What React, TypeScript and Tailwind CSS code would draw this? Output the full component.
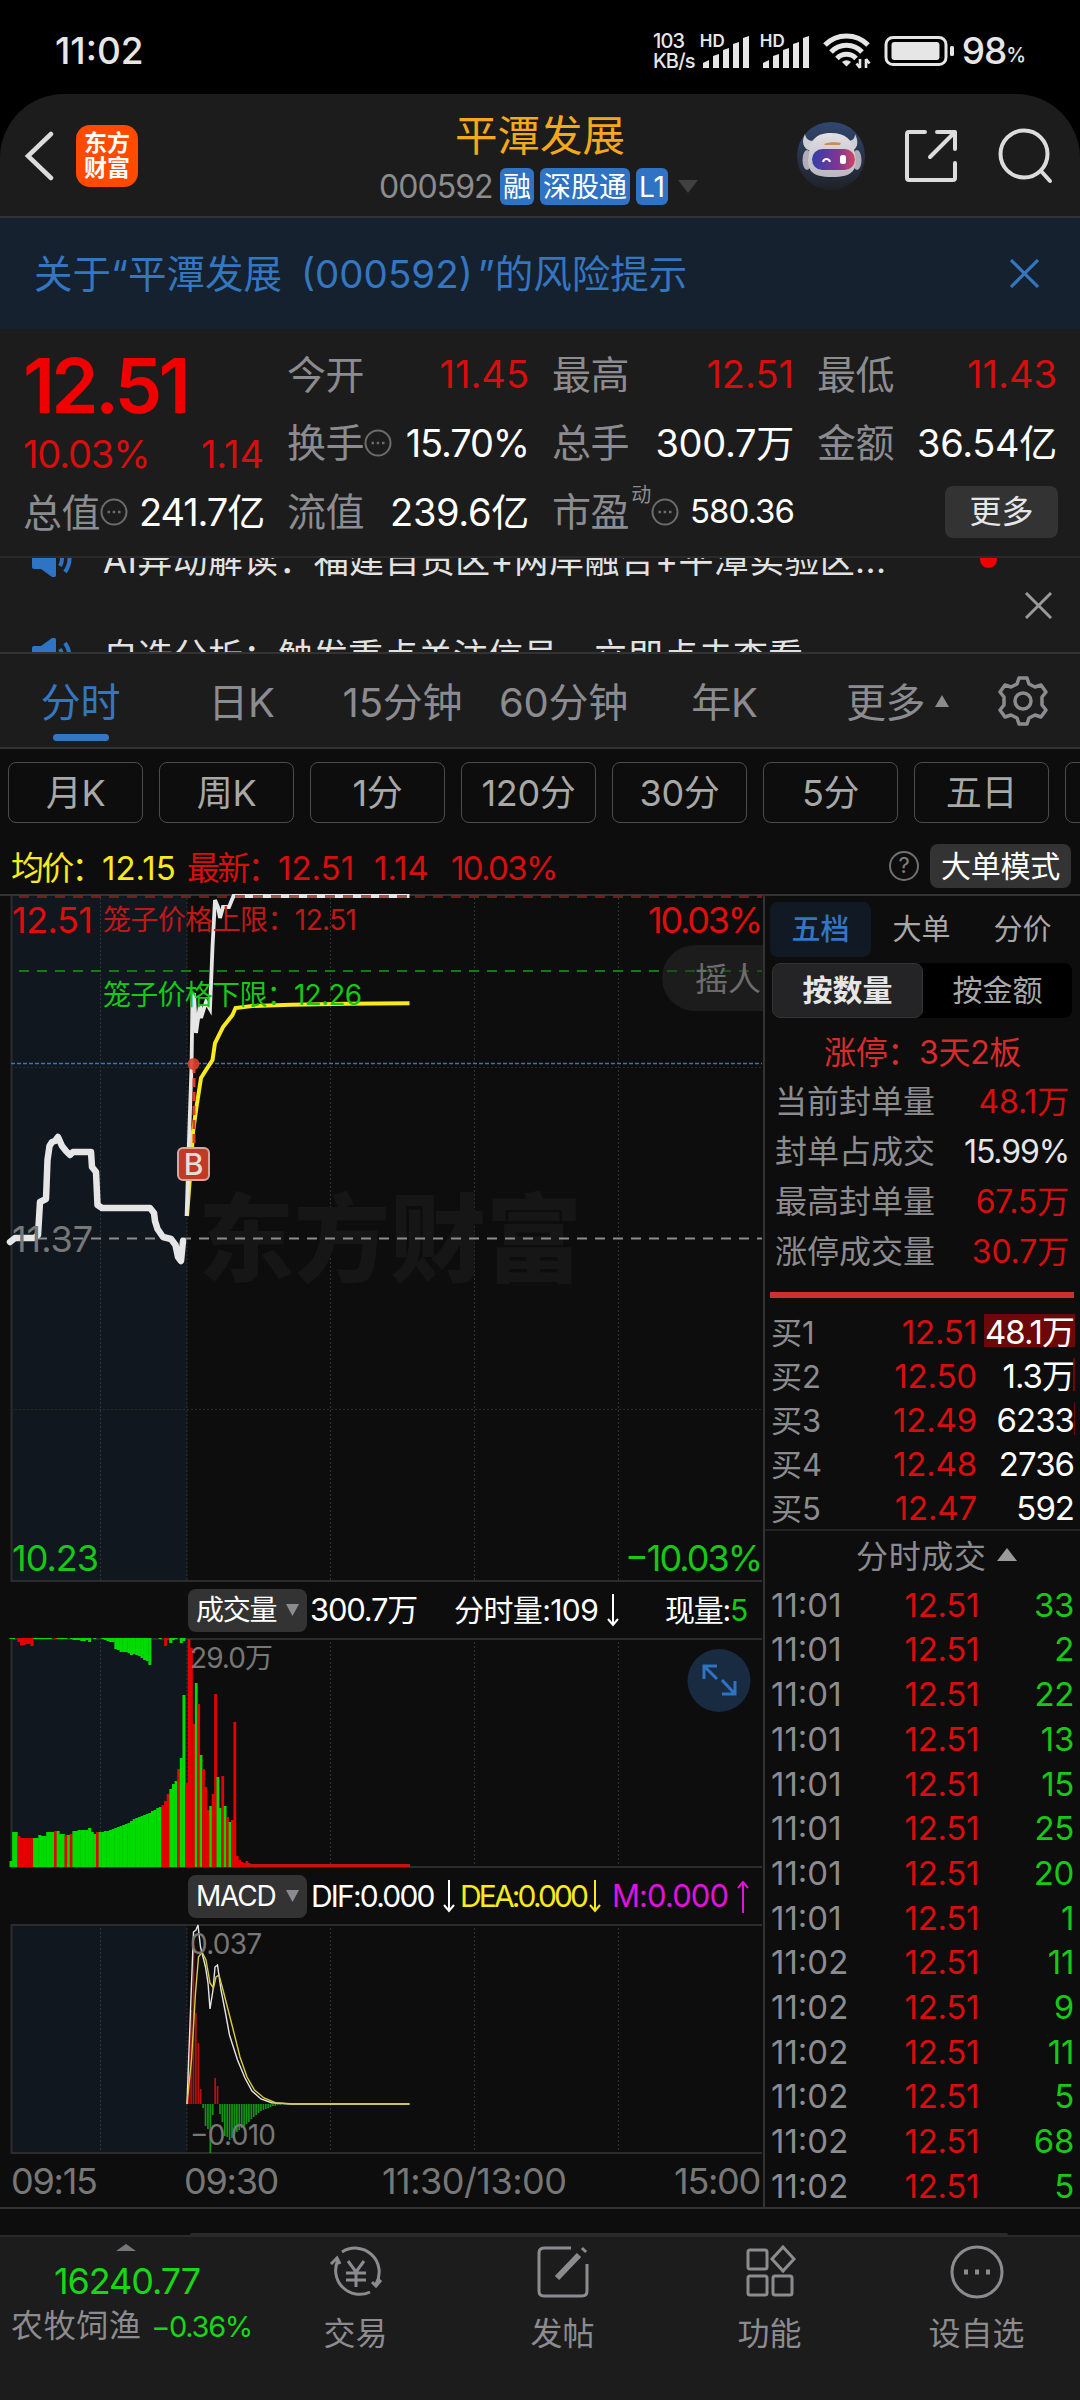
import { ReactNode } from 'react'
import { clsx } from 'clsx'

type Bar = [height: number, color: 'r' | 'g']

const RED = '#e60000'
const GREEN = '#00dc00'

const barColor = { r: RED, g: GREEN }

// Call auction volume, one bar per 2.6px
const AUCTION: Bar[] = [
  [6, 'g'], [35, 'g'], [35, 'g'], [31, 'r'], [29, 'r'], [29, 'r'], [29, 'r'], [29, 'r'], [29, 'r'], [29, 'g'],
  [29, 'g'], [32, 'g'], [31, 'g'], [31, 'g'], [35, 'g'], [35, 'g'], [35, 'g'], [36, 'r'], [36, 'g'], [33, 'g'],
  [33, 'g'], [32, 'r'], [32, 'g'], [33, 'r'], [36, 'g'], [36, 'g'], [37, 'g'], [37, 'g'], [37, 'g'], [37, 'g'],
  [39, 'g'], [35, 'g'], [33, 'g'], [35, 'r'], [35, 'g'], [35, 'g'], [36, 'g'], [36, 'g'], [37, 'g'], [38, 'g'],
  [39, 'g'], [40, 'g'], [41, 'g'], [42, 'g'], [43, 'g'], [44, 'g'], [46, 'g'], [48, 'g'], [49, 'g'], [50, 'g'],
  [51, 'g'], [52, 'g'], [53, 'g'], [54, 'g'], [56, 'g'], [57, 'g'], [59, 'g'], [60, 'g'], [62, 'r'], [66, 'r'],
  [73, 'r'], [78, 'g'], [83, 'g'], [86, 'g'], [98, 'r'], [109, 'g'], [172, 'g'],
]

// Unmatched auction volume, hangs from the top edge
const UNMATCHED: Bar[] = [
  [1, 'g'], [1, 'g'], [0, 'g'], [4, 'r'], [7, 'r'], [7, 'r'], [6, 'r'], [6, 'r'], [8, 'r'], [1, 'g'],
  [1, 'g'], [1, 'g'], [1, 'g'], [1, 'g'], [1, 'g'], [1, 'g'], [0, 'g'], [1, 'r'], [1, 'g'], [1, 'g'],
  [1, 'g'], [1, 'g'], [0, 'g'], [1, 'g'], [2, 'g'], [2, 'g'], [2, 'g'], [3, 'g'], [3, 'g'], [2, 'g'],
  [4, 'g'], [0, 'g'], [1, 'g'], [0, 'g'], [0, 'g'], [1, 'g'], [2, 'g'], [3, 'g'], [4, 'g'], [4, 'g'],
  [11, 'g'], [12, 'g'], [14, 'g'], [14, 'g'], [14, 'g'], [15, 'g'], [17, 'g'], [16, 'g'], [17, 'g'], [18, 'g'],
  [20, 'g'], [22, 'g'], [23, 'g'], [27, 'g'], [0, 'g'], [0, 'g'], [0, 'g'], [1, 'g'], [0, 'g'], [8, 'r'],
  [2, 'r'], [5, 'g'], [2, 'g'], [1, 'g'], [0, 'g'], [5, 'g'], [3, 'g'],
]

// Minute volume after 09:30, one bar per 2.4px
const TRADING: Bar[] = [
  [84, 'r'], [228, 'r'], [219, 'r'], [143, 'r'], [184, 'g'], [163, 'r'], [112, 'g'], [98, 'r'], [80, 'r'], [57, 'r'],
  [61, 'g'], [73, 'r'], [173, 'r'], [90, 'g'], [59, 'g'], [91, 'r'], [61, 'g'], [50, 'r'], [45, 'g'], [47, 'r'],
  [145, 'r'], [11, 'r'], [7, 'r'], [5, 'r'], [4, 'r'], [6, 'r'], [4, 'r'],
]

const MACD_BARS = [
  50, 94, 155, 91, 61, 15, -4, -22, -25, -49, -11, 26, 18, -10, -18, -32, -33, -36, -34, -30, -28, -26, -24, -22,
  -20, -18, -15, -13, -11, -9, -7, -6, -5, -4, -3, -2, -2, -1, -1,
]

const BUYS = [
  { label: '买1', price: '12.51', volume: '48.1万', depth: 91 },
  { label: '买2', price: '12.50', volume: '1.3万', depth: 2 },
  { label: '买3', price: '12.49', volume: '6233', depth: 1 },
  { label: '买4', price: '12.48', volume: '2736', depth: 0 },
  { label: '买5', price: '12.47', volume: '592', depth: 0 },
]

const TICKS: [string, string][] = [
  ['11:01', '33'], ['11:01', '2'], ['11:01', '22'], ['11:01', '13'], ['11:01', '15'], ['11:01', '25'], ['11:01', '20'],
  ['11:01', '1'], ['11:02', '11'], ['11:02', '9'], ['11:02', '11'], ['11:02', '5'], ['11:02', '68'], ['11:02', '5'],
]

function Signal() {
  return (
    <div className="relative h-[34px] w-[50px]">
      <span className="absolute -top-px left-0 text-[17px] leading-none font-semibold">HD</span>
      <svg className="absolute bottom-0 left-[2px]" width="48" height="32" viewBox="0 0 48 32" fill="#e6e6e6">
        <path d="M1 32V27L7 24V32Z" />
        <path d="M11 32V20L17 18V32Z" />
        <path d="M21 32V14L27 12V32Z" />
        <path d="M31 32V8L37 6V32Z" />
        <path d="M41 32V2L47 0V32Z" />
      </svg>
    </div>
  )
}

function StatusBar() {
  return (
    <div className="flex h-[94px] items-center bg-black pt-[7px] pr-[54px] pl-[55px] text-[#e6e6e6]">
      <span className="text-[37px] font-medium">11:02</span>
      <div className="ml-auto flex items-center">
        <div className="mr-[5px] text-[20px] leading-[20px] font-medium tracking-[-0.04em]">
          <div>103</div>
          <div>KB/s</div>
        </div>
        <Signal />
        <div className="ml-[10px]">
          <Signal />
        </div>
        <svg className="ml-[13px]" width="48" height="36" viewBox="0 0 48 36" fill="none" stroke="#e6e6e6" strokeWidth="5">
          <path d="M2 12A30 30 0 0 1 45 12" />
          <path d="M8 19A21 21 0 0 1 39 19" />
          <path d="M14 25.500A13 13 0 0 1 33 25.500" />
          <path d="M19 29a7 7 0 0 1 9 0l-4.500 4.500Z" fill="#e6e6e6" stroke="none" />
          <path d="M37 26V35M43 35V26M33.500 30.500L37 35M46.500 30.500L43 26" strokeWidth="2.600" />
        </svg>
        <svg className="ml-[13px]" width="72" height="32" viewBox="0 0 72 32">
          <rect x="2" y="2.500" width="60" height="27" rx="7" fill="none" stroke="#e6e6e6" strokeWidth="3" />
          <rect x="7.500" y="7" width="48" height="18" rx="3" fill="#e6e6e6" />
          <rect x="66" y="11" width="4" height="10" rx="1.500" fill="#e6e6e6" />
        </svg>
        <span className="ml-[6px] text-[37px] leading-none font-medium tracking-[-0.03em]">98</span>
        <span className="mt-2 text-[20px] leading-none font-medium">%</span>
      </div>
    </div>
  )
}

function Badge({ children, className }: { children: ReactNode; className: string }) {
  return (
    <span className={clsx('flex h-[37px] items-center justify-center rounded-[6px] bg-[#2f73c4] text-[28px] text-white', className)}>
      {children}
    </span>
  )
}

function Robot() {
  return (
    <svg width="68" height="68" viewBox="0 0 68 68">
      <defs>
        <linearGradient id="robotBg" x1="0" y1="0" x2="0" y2="1">
          <stop offset="0" stopColor="#31476f" />
          <stop offset="1" stopColor="#1f2127" />
        </linearGradient>
        <linearGradient id="robotFace" x1="0" y1="0" x2="1" y2="0">
          <stop offset="0" stopColor="#3340a8" />
          <stop offset="0.6" stopColor="#7d3596" />
          <stop offset="1" stopColor="#cf4660" />
        </linearGradient>
        <linearGradient id="robotHead" x1="0" y1="0" x2="0" y2="1">
          <stop offset="0" stopColor="#e2e0e4" />
          <stop offset="1" stopColor="#b9b7c0" />
        </linearGradient>
      </defs>
      <circle cx="34" cy="34" r="34" fill="url(#robotBg)" />
      <path d="M8 12C4 20 6 27 14 29L22 17C14 21 9 18 8 12ZM58 12C62 20 61 27 54 29L46 17C53 21 58 18 58 12Z" fill="#cfced4" />
      <ellipse cx="10" cy="38" rx="4.500" ry="10" fill="#aeadb8" />
      <ellipse cx="60" cy="38" rx="4.500" ry="10" fill="#aeadb8" />
      <path d="M12 32C13 17 20 11 34 11S56 17 58 32C61 48 56 55 35 55S9 48 12 32Z" fill="url(#robotHead)" />
      <rect x="15" y="27" width="43" height="21" rx="10.500" fill="url(#robotFace)" />
      <path d="M27 22C31 20 40 20 44 21L43 23H28Z" fill="#c98b58" />
      <path d="M26 40C27 36 32 36 33 40" fill="none" stroke="#fff" strokeWidth="2" />
      <rect x="43" y="33" width="6" height="9" rx="2.500" fill="#fff" />
    </svg>
  )
}

function Header() {
  return (
    <header className="flex h-[124px] items-center rounded-t-[64px] border-b-2 border-[#333] bg-[#1c1c1c] pt-[2px] pl-[24px]">
      <svg width="30" height="52" viewBox="0 0 30 52" fill="none" stroke="#dcdcdc" strokeWidth="4.500" strokeLinecap="round">
        <path d="M27 4L4 26L27 48" />
      </svg>
      <div className="ml-[22px] flex size-[62px] flex-col items-center justify-center rounded-[14px] bg-[#ff4a00] text-[23px] leading-[25px] font-bold text-white">
        <span>东方</span>
        <span>财富</span>
      </div>
      <div className="ml-[241px] flex w-[320px] flex-col pt-[4px]">
        <h1 className="ml-[76px] text-[42.500px] leading-[50px] text-[#f7a71c]">平潭发展</h1>
        <div className="mt-[7px] flex h-[37px] items-center text-[32px] text-[#8c8c90]">
          <span className="w-[121px] tracking-[-0.03em]">000592</span>
          <Badge className="w-[34px]">融</Badge>
          <Badge className="ml-[6px] w-[90px]">深股通</Badge>
          <Badge className="ml-[6px] w-[32px]">L1</Badge>
          <svg className="ml-[10px]" width="20" height="13" viewBox="0 0 20 13" fill="#404040">
            <path d="M0 0H20L10 13Z" />
          </svg>
        </div>
      </div>
      <div className="ml-auto flex items-center gap-[39px] pr-[27px]">
        <Robot />
        <svg width="54" height="54" viewBox="0 0 54 54" fill="none" stroke="#dcdcdc" strokeWidth="4" strokeLinecap="round" strokeLinejoin="round">
          <path d="M21 3H5Q3 3 3 5V49Q3 51 5 51H49Q51 51 51 49V34M33 3H51V20M51 3L26 28" />
        </svg>
        <svg width="56" height="56" viewBox="0 0 56 56" fill="none" stroke="#dcdcdc" strokeWidth="4" strokeLinecap="round">
          <circle cx="27" cy="26" r="23.500" />
          <path d="M44 43L53 53" />
        </svg>
      </div>
    </header>
  )
}

function Cross({ size, color }: { size: number; color: string }) {
  return (
    <svg width={size} height={size} viewBox="0 0 28 28" fill="none" stroke={color} strokeWidth="3">
      <path d="M1 1L27 27M27 1L1 27" />
    </svg>
  )
}

function RiskBanner() {
  return (
    <div className="flex h-[111px] items-center justify-between bg-[#15212f] pr-[41px] pl-[34px] text-[#3476c0]">
      <span className="mt-[2px] text-[38.500px]">
        关于“平潭发展<span className="mr-[5px] ml-[19px]">(000592)</span>”的风险提示
      </span>
      <Cross size={29} color="#3476c0" />
    </div>
  )
}

function Dots() {
  return (
    <svg width="28" height="28" viewBox="0 0 28 28" fill="none" stroke="#6c6c6c" strokeWidth="2">
      <circle cx="14" cy="14" r="12.500" />
      <path d="M7.500 14H10M12.700 14H15.200M18 14H20.500" strokeWidth="2.500" />
    </svg>
  )
}

interface StatProps {
  label: string
  value: string
  sup?: string
  dots?: boolean
  up?: boolean
  small?: boolean
}

function Stat({ label, value, sup, dots, up, small }: StatProps) {
  return (
    <div className="flex items-center">
      <span className="-ml-px tracking-[-0.01em] text-[#8c8c90]">{label}</span>
      {sup && <span className="-mt-[34px] ml-[2px] text-[20px] text-[#8c8c90]">{sup}</span>}
      {dots && <Dots />}
      <span
        className={clsx(
          '-mr-px ml-auto',
          up ? 'text-[#d80d0d]' : 'text-white',
          small ? 'text-[33px]' : 'text-[38px]',
          dots ? 'tracking-[-0.03em]' : up ? 'tracking-normal' : 'tracking-[-0.008em]',
        )}
      >
        {value}
      </span>
    </div>
  )
}

function Quote() {
  return (
    <section className="grid h-[229px] grid-cols-[239px_240px_240px_238px] gap-x-[25px] border-b-2 border-[#2a2a2a] bg-[#1c1c1c] pt-[11px] pl-[24px] text-[39px] leading-none">
      <div className="flex flex-col">
        <div className="mt-[6px] -ml-px text-[76px] leading-[78px] font-semibold tracking-[-0.05em] text-[#f00000]">12.51</div>
        <div className="mt-[10px] -ml-px flex h-[40px] items-center justify-between text-[38px] text-[#d80d0d]">
          <span className="tracking-[-0.03em]">10.03%</span>
          <span className="-mr-px">1.14</span>
        </div>
        <div className="mt-[4px] grid h-[68px]">
          <Stat label="总值" value="241.7亿" dots />
        </div>
      </div>
      <div className="grid h-[206px] grid-rows-3">
        <Stat label="今开" value="11.45" up />
        <Stat label="换手" value="15.70%" dots />
        <Stat label="流值" value="239.6亿" />
      </div>
      <div className="grid h-[206px] grid-rows-3">
        <Stat label="最高" value="12.51" up />
        <Stat label="总手" value="300.7万" />
        <Stat label="市盈" sup="动" value="580.36" dots small />
      </div>
      <div className="grid h-[206px] grid-rows-3">
        <Stat label="最低" value="11.43" up />
        <Stat label="金额" value="36.54亿" />
        <button className="-mr-[2px] flex h-[52px] w-[113px] items-center justify-center self-center justify-self-end rounded-[8px] bg-[#333] text-[32px] text-[#e6e6e6]">
          更多
        </button>
      </div>
    </section>
  )
}

function Speaker() {
  return (
    <div className="w-[72px] shrink-0">
      <svg width="42" height="36" viewBox="0 0 42 36" fill="none" stroke="#2f73c4" strokeWidth="4">
        <path d="M1 10Q1 8 3 8H10L21 0Q25 -1 25 2V34Q25 37 21 36L10 28H3Q1 28 1 26Z" fill="#2f73c4" stroke="none" />
        <path d="M29 11Q33 18 29 25M34 5Q43 18 34 31" />
      </svg>
    </div>
  )
}

function News() {
  return (
    <section className="relative flex h-[96px] flex-col overflow-hidden border-b-2 border-[#333] bg-[#1c1c1c] pl-[31px] text-[35px] text-[#e2e2e2]">
      <div className="-mt-[24px] flex h-[50px] shrink-0 items-center">
        <Speaker />
        <span className="mt-[2px] tracking-[0.009em] whitespace-nowrap">AI异动解读：福建自贸区+两岸融合+平潭实验区...</span>
      </div>
      <div className="mt-[47px] flex h-[50px] shrink-0 items-center">
        <Speaker />
        <span className="whitespace-nowrap">自选分析：触发重点关注信号，立即点击查看</span>
      </div>
      <span className="absolute -top-[7px] left-[980px] size-[17px] rounded-full bg-[#f00000]" />
      <div className="absolute top-[34px] right-[28px]">
        <Cross size={27} color="#9a9a9a" />
      </div>
    </section>
  )
}

const TABS = ['分时', '日K', '15分钟', '60分钟', '年K']

function PeriodTabs() {
  return (
    <nav className="flex h-[95px] items-center border-b-2 border-[#333] bg-[#1c1c1c] text-[40px] text-[#8c8c90]">
      {TABS.map((tab, i) => (
        <div key={tab} className={clsx('flex h-full w-[161px] flex-col items-center pt-[20px]', i === 0 && 'text-[#3476c0]')}>
          <span className="leading-[58px] tracking-[-0.005em] whitespace-nowrap">{tab}</span>
          {i === 0 && <span className="mt-[2px] h-[7px] w-[56px] rounded-full bg-[#3476c0]" />}
        </div>
      ))}
      <span className="mt-[4px] ml-[41px] tracking-[-0.01em]">更多</span>
      <svg className="ml-[10px]" width="14" height="12" viewBox="0 0 14 12" fill="#8c8c90">
        <path d="M7 0L14 12H0Z" />
      </svg>
      <svg className="ml-[49px]" width="50" height="50" viewBox="0 0 50 50" fill="none" stroke="#8c8c90" strokeWidth="3.500" strokeLinejoin="round">
        <path d="M21 2H29L31 8L37 11L43 9L48 16L44 21V29L48 34L43 41L37 39L31 42L29 48H21L19 42L13 39L7 41L2 34L6 29V21L2 16L7 9L13 11L19 8Z" />
        <circle cx="25" cy="25" r="8" />
      </svg>
    </nav>
  )
}

const CHIPS = ['月K', '周K', '1分', '120分', '30分', '5分', '五日', '']

function Chips() {
  return (
    <div className="flex h-[88px] gap-[16px] overflow-hidden pt-[13px] pl-[8px]">
      {CHIPS.map((chip) => (
        <div
          key={chip}
          className="flex h-[61px] w-[135px] shrink-0 items-center justify-center rounded-[8px] border border-[#4c4c4c] text-[36px] tracking-[-0.01em] text-[#a8a8a8]"
        >
          {chip}
        </div>
      ))}
    </div>
  )
}

function PriceLine() {
  return (
    <div className="flex h-[57px] items-center pr-[9px] pl-[11px] text-[33px] whitespace-nowrap text-[#d80d0d]">
      <div className="mt-[4px] flex leading-[40px]">
        <span className="w-[91px] tracking-[-0.085em] text-[#f8ea1c]">均价：</span>
        <span className="w-[85px] text-[#f8ea1c]">12.15</span>
        <span className="w-[91px] tracking-[-0.085em]">最新：</span>
        <span className="w-[96px]">12.51</span>
        <span className="w-[77px]">1.14</span>
        <span className="tracking-[-0.05em]">10.03%</span>
      </div>
      <span className="mr-[11px] ml-auto flex size-[30px] items-center justify-center rounded-full border-2 border-[#707070] text-[22px] text-[#808080]">
        ?
      </span>
      <button className="h-[44px] w-[141px] rounded-[8px] bg-[#333] text-[30px] tracking-[-0.01em] text-white">大单模式</button>
    </div>
  )
}

const COLUMNS = [100.500, 187, 330.500, 474.500, 618.500]

// Frame, auction shade and time columns shared by the three charts
function Frame({ height }: { height: number }) {
  return (
    <g>
      <rect x="11" y="0" width="176" height={height} fill="#10171f" />
      {COLUMNS.map((x) => (
        <path key={x} d={`M${x} 0V${height}`} stroke="#333" strokeDasharray="2 2" />
      ))}
      <path d={`M11.500 0V${height}`} stroke="#2c2c2c" strokeWidth="2" />
      <path d={`M11 1H762`} stroke="#2c2c2c" strokeWidth="2" />
      <path d={`M11 ${height - 1}H762`} stroke="#2c2c2c" strokeWidth="2" />
    </g>
  )
}

const AUCTION_PRICE =
  '10,348 15,344 34,344 38,341 40,308 46,305 47.5,266 49.5,252 52,248 55,247 58,243 62,252 66,257 70,261 73,258 91,258 92,273 96,278 97.5,311 102,314 150,314 154,319 155,327 157.5,335 163,343 171,345 175.5,351 178,363 181,367 183,347'
const PRICE =
  '186.6,322 189,246 191.5,173 192.5,106 194,99 196,139 200,111 201,124 206,108 210,115 212.5,53 215,6 218,13 220,24 223,13 229,13 233.5,2 409.5,2'
const AVERAGE =
  '187,322 191.5,263 193,238 196.5,213 201,184 206,176 212.5,166 215,149 223,133 232.5,121 235.5,114 252,112 291,110.7 349,109.7 409.5,109.3'

function PriceChart() {
  return (
    <svg className="block" width="763" height="688" viewBox="0 0 763 688" fontSize="36">
      <Frame height={688} />
      <path d="M0 1H763" stroke="#333" strokeWidth="2" />
      <path d="M11 173.500H762M11 515.500H762" stroke="#2a2a2a" strokeDasharray="2 2" />
      <text x="198" y="380" fontSize="96" fontWeight="900" textLength="384" fill="#161616">
        东方财富
      </text>
      <path d="M19 77H762" stroke="#147a14" strokeWidth="2" strokeDasharray="10 8" />
      <path d="M11 169.500H762" stroke="#3f6fb4" strokeWidth="1.500" strokeDasharray="4 2" />
      <path d="M19 344.500H762" stroke="#8c8c8c" strokeWidth="2" strokeDasharray="10 8" />
      <polyline points={AVERAGE} fill="none" stroke="#f8ea1c" strokeWidth="4" />
      <polyline points={AUCTION_PRICE} fill="none" stroke="#e6e6e6" strokeWidth="6.500" strokeLinejoin="round" strokeLinecap="round" />
      <polyline points={PRICE} fill="none" stroke="#e6e6e6" strokeWidth="3.800" />
      <path d="M19 2.500H762" stroke="#8f2020" strokeWidth="3" strokeDasharray="10 8" opacity="0.75" />
      <path d="M194 170V253" stroke="#d8402c" strokeWidth="3" strokeDasharray="9 5" />
      <circle cx="193.500" cy="170" r="6" fill="#d8402c" opacity="0.9" />
      <rect x="178" y="254" width="31" height="32" rx="5" fill="#c03a26" stroke="#d9a59c" strokeWidth="2" />
      <text x="193.500" y="280.500" fontSize="30" fontWeight="500" textAnchor="middle" fill="#e6ddda">
        B
      </text>
      <path d="M763 51H695A33 33 0 0 0 695 117H763Z" fill="#1c1c1c" />
      <path d="M667 77H762" stroke="#147a14" strokeWidth="2" strokeDasharray="10 8" opacity="0.6" />
      <text x="695" y="97" fontSize="33" fill="#6c6c6c">
        摇人
      </text>
      <g fill="#e00d0d">
        <text x="12" y="39" textLength="81">
          12.51
        </text>
        <text x="103" y="36" fontSize="28" textLength="254" fill="#c01818">
          笼子价格上限：12.51
        </text>
        <text x="648" y="39" textLength="115">
          10.03%
        </text>
      </g>
      <g fill="#17c817">
        <text x="103" y="111" fontSize="28" textLength="259">
          笼子价格下限：12.26
        </text>
        <text x="12" y="677" textLength="87">
          10.23
        </text>
        <text x="625" y="677" textLength="138">
          −10.03%
        </text>
      </g>
      <text x="12" y="358" textLength="81" fill="#777">
        11.37
      </text>
    </svg>
  )
}

function VolumeChart() {
  return (
    <svg className="block" width="763" height="230" viewBox="0 0 763 230">
      <Frame height={230} />
      {UNMATCHED.map(([h, c], i) => (
        <rect key={i} x={9.500 + i * 2.620} y="0" width="3" height={h} fill={barColor[c]} />
      ))}
      {AUCTION.map(([h, c], i) => (
        <rect key={i} x={9.500 + i * 2.620} y={229 - h} width="3" height={h} fill={barColor[c]} />
      ))}
      {TRADING.map(([h, c], i) => (
        <rect key={i} x={185.200 + i * 2.410} y={229 - h} width="2.800" height={h} fill={barColor[c]} />
      ))}
      <rect x="245" y="226" width="165" height="3" fill="#cc1010" />
      <text x="190" y="30" fontSize="28" textLength="83" fill="#777">
        29.0万
      </text>
      <circle cx="719" cy="42.500" r="31.500" fill="#182b41" />
      <path d="M717 41L705 29M704 41V28H717M722 42L734 55M735 43V56H722" fill="none" stroke="#2f73c4" strokeWidth="3" />
    </svg>
  )
}

function MacdChart() {
  return (
    <svg className="block" width="763" height="230" viewBox="0 0 763 230">
      <Frame height={230} />
      {MACD_BARS.map((h, i) => (
        <rect
          key={i}
          x={187.800 + i * 2.410}
          y={h > 0 ? 180 - h : 180}
          width="1.700"
          height={Math.abs(h)}
          fill={h > 0 ? '#b81010' : '#129612'}
        />
      ))}
      <polyline
        points="187,180 190.5,86 193.500,8 196,6 198,1 200.500,23 205.500,43 208,59 210,85 213,66 215,43 217.500,41 221,66 225.500,89 229.500,111 237.500,136 245,154 252,167 261,175 271.500,178.700 291,180 409.500,180"
        fill="none"
        stroke="#e6e6e6"
        strokeWidth="1.400"
      />
      <polyline
        points="187,180 191.500,136 195.500,69 198.500,33 202,28 206,36 210,59 213.500,64 216,53 219,51 223,66 232.500,103 240,133 247,153 254.500,166 264,174 276,179 295,180 409.500,180"
        fill="none"
        stroke="#d8cc3c"
        strokeWidth="1.400"
      />
      <g fontSize="28" fill="#777">
        <text x="190" y="30" textLength="72">
          0.037
        </text>
        <text x="190" y="221" textLength="86">
          −0.010
        </text>
      </g>
    </svg>
  )
}

function IndicatorButton({ children }: { children: ReactNode }) {
  return (
    <button className="flex h-[43px] w-[119px] shrink-0 items-center justify-between rounded-[8px] bg-[#333] pr-[8px] pl-[8px] text-[28px] text-white">
      {children}
      <svg width="13" height="12" viewBox="0 0 13 12" fill="#8c8c90">
        <path d="M0 0H13L6.500 12Z" />
      </svg>
    </button>
  )
}

function Arrow({ up }: { up?: boolean }) {
  return (
    <svg className={clsx('shrink-0', up && 'rotate-180')} width="12" height="33" viewBox="0 0 12 33" fill="none" stroke="currentColor" strokeWidth="2">
      <path d="M6 0V31M1 25L6 31L11 25" />
    </svg>
  )
}

function Charts() {
  return (
    <div className="w-[763px]">
      <PriceChart />
      <div className="flex h-[56px] items-center pl-[188px] text-[31px] tracking-[-0.04em] whitespace-nowrap text-white">
        <IndicatorButton>成交量</IndicatorButton>
        <span className="ml-[3px] w-[144px]">300.7万</span>
        <span className="w-[153px] text-[30px] tracking-[-0.02em]">分时量:109</span>
        <Arrow />
        <span className="ml-[46px] text-[30px]">
          现量:<span className="text-[#17c817]">5</span>
        </span>
      </div>
      <VolumeChart />
      <div className="flex h-[56px] items-center pl-[188px] text-[31px] tracking-[-0.04em] whitespace-nowrap text-white">
        <IndicatorButton>MACD</IndicatorButton>
        <span className="ml-[4px] w-[132px] text-[30px] tracking-[-0.06em]">DIF:0.000</span>
        <Arrow />
        <span className="ml-[5px] flex w-[152px] items-center text-[#f8ea1c]">
          <span className="w-[129px] text-[30px] tracking-[-0.095em]">DEA:0.000</span>
          <Arrow />
        </span>
        <span className="w-[125px] tracking-[-0.03em] text-[#e212dc]">M:0.000</span>
        <span className="text-[#e212dc]">
          <Arrow up />
        </span>
      </div>
      <MacdChart />
      <div className="flex h-[53px] items-center pl-[11px] text-[36px] tracking-[-0.035em] whitespace-nowrap text-[#777]">
        <span className="w-[173px]">09:15</span>
        <span className="w-[198px]">09:30</span>
        <span className="w-[292px] tracking-[-0.015em]">11:30/13:00</span>
        <span>15:00</span>
      </div>
    </div>
  )
}

function SealRow({ label, value, white }: { label: string; value: string; white?: boolean }) {
  return (
    <div className="flex h-[50.250px] items-center justify-between pt-[1px] pr-[11px] pl-[10px] text-[32px]">
      <span className="text-[#8c8c90]">{label}</span>
      <span className={white ? 'tracking-[-0.035em] text-[#e6e6e6]' : 'tracking-[-0.005em] text-[#d80d0d]'}>{value}</span>
    </div>
  )
}

function OrderPanel() {
  return (
    <aside className="flex w-[317px] flex-col border-t-2 border-l-2 border-[#333] leading-none">
      <div className="mt-[6px] ml-[5px] flex h-[55px] w-[303px] text-[29px] text-[#a8a8a8]">
        <span className="flex flex-1 items-center justify-center rounded-[8px] bg-[#111a24] font-medium text-[#3476c0]">五档</span>
        <span className="flex flex-1 items-center justify-center">大单</span>
        <span className="flex flex-1 items-center justify-center">分价</span>
      </div>
      <div className="mt-[6px] ml-[7px] flex h-[55px] w-[300px] rounded-[8px] bg-black text-[30px] text-[#a8a8a8]">
        <span className="flex flex-1 items-center justify-center rounded-[8px] border border-[#333] bg-[#242426] font-bold text-[#e6e6e6]">按数量</span>
        <span className="flex flex-1 items-center justify-center">按金额</span>
      </div>
      <div className="mt-[9px] flex h-[50px] items-center justify-center pt-[2px] text-[32px] tracking-[-0.01em] text-[#d92b2b]">
        涨停：3天2板
      </div>
      <SealRow label="当前封单量" value="48.1万" />
      <SealRow label="封单占成交" value="15.99%" white />
      <SealRow label="最高封单量" value="67.5万" />
      <SealRow label="涨停成交量" value="30.7万" />
      <div className="mt-[15px] ml-[5px] h-[6px] w-[304px] bg-[#cc3030]" />
      <div className="mt-[11px] h-[220px]">
        {BUYS.map((row) => (
          <div key={row.label} className="relative flex h-[44px] items-center pt-[4px] pr-[6px] pl-[6px] text-[33px]">
            <span className="absolute top-[5px] right-[5px] h-[33px] bg-[#6d0808]" style={{ width: row.depth }} />
            <span className="text-[31px] text-[#8c8c90]">{row.label}</span>
            <span className="ml-auto tracking-[-0.005em] text-[#d80d0d]">{row.price}</span>
            <span className="relative w-[97px] text-right tracking-[-0.03em] text-white">{row.volume}</span>
          </div>
        ))}
      </div>
      <div className="flex h-[53px] items-center border-t-2 border-[#222] pt-[2px] pl-[91px] text-[32px] tracking-[0.02em] text-[#8c8c90]">
        分时成交
        <svg className="-mt-[6px] ml-[10px]" width="20" height="13" viewBox="0 0 20 13" fill="#9a9a9a">
          <path d="M10 0L20 13H0Z" />
        </svg>
      </div>
      {TICKS.map(([time, volume], i) => (
        <div key={i} className="flex h-[44.850px] items-center pt-[3px] pr-[6px] pl-[6px] text-[33px] tracking-[-0.01em]">
          <span className="tracking-normal text-[#8c8c90]">{time}</span>
          <span className="ml-auto text-[#d80d0d]">12.51</span>
          <span className="w-[95px] text-right text-[#17c817]">{volume}</span>
        </div>
      ))}
    </aside>
  )
}

const NAV = [
  {
    label: '交易',
    icon: (
      <>
        <path d="M16 8A24 24 0 0 1 50 40M44 48A24 24 0 0 1 12 16M5 20L11 14L14 20M46 38L50 42L55 36" />
        <path d="M22 17L30 28L38 17M30 28V43M20 29H40M20 36H40" />
      </>
    ),
  },
  {
    label: '发帖',
    icon: (
      <>
        <path d="M38 4H11Q6 4 6 9V47Q6 52 11 52H49Q54 52 54 47V20" />
        <path d="M24 34L46 11M50 7L52 5" strokeWidth="6" />
      </>
    ),
  },
  {
    label: '功能',
    icon: (
      <>
        <rect x="8" y="6" width="19" height="19" rx="2" />
        <path d="M43 3L54 15L43 27L32 15Z" />
        <rect x="8" y="32" width="19" height="19" rx="2" />
        <rect x="33" y="32" width="19" height="19" rx="2" />
      </>
    ),
  },
  {
    label: '设自选',
    icon: (
      <>
        <circle cx="30" cy="28" r="25" />
        <path d="M17 28H21M28 28H32M39 28H43" strokeWidth="5" />
      </>
    ),
  },
]

function BottomNav() {
  return (
    <footer className="flex h-[165px] border-t-2 border-[#2a2a2a] bg-[#1c1c1c] leading-none">
      <div className="flex w-[252px] flex-col items-center">
        <svg className="mt-[7px]" width="20" height="7" viewBox="0 0 20 7" fill="#77777b">
          <path d="M10 0L20 7H0Z" />
        </svg>
        <span className="mt-[12px] ml-[2px] text-[36px] tracking-[-0.03em] text-[#17d817]">16240.77</span>
        <div className="mt-[11px] flex h-[32px] w-full items-center pl-[11px] whitespace-nowrap">
          <span className="w-[143px] text-[32px] tracking-[0.02em] text-[#8c8c90]">农牧饲渔</span>
          <span className="text-[29px] tracking-[-0.045em] text-[#17d817]">−0.36%</span>
        </div>
      </div>
      {NAV.map((item) => (
        <div key={item.label} className="flex w-[207px] flex-col items-center pt-[7px]">
          <svg width="60" height="56" viewBox="0 0 60 56" fill="none" stroke="#8c8c90" strokeWidth="3">
            {item.icon}
          </svg>
          <span className="mt-[18px] text-[32px] text-[#8c8c90]">{item.label}</span>
        </div>
      ))}
    </footer>
  )
}

export default function App() {
  return (
    <div className="h-[2400px] w-[1080px] overflow-hidden bg-black font-['Inter','Noto_Sans_CJK_SC',sans-serif]">
      <StatusBar />
      <Header />
      <RiskBanner />
      <Quote />
      <News />
      <div className="bg-[#0d0d0d]">
        <PeriodTabs />
        <Chips />
        <PriceLine />
        <main className="flex h-[1315px] border-b-2 border-[#333]">
          <Charts />
          <OrderPanel />
        </main>
        {/* Top edge of the sheet tucked under the bottom bar */}
        <div className="flex h-[26px] items-end">
          <div className="ml-[190px] h-[2px] w-[818px] rounded-t bg-[#2a2a2a]" />
        </div>
      </div>
      <BottomNav />
    </div>
  )
}
